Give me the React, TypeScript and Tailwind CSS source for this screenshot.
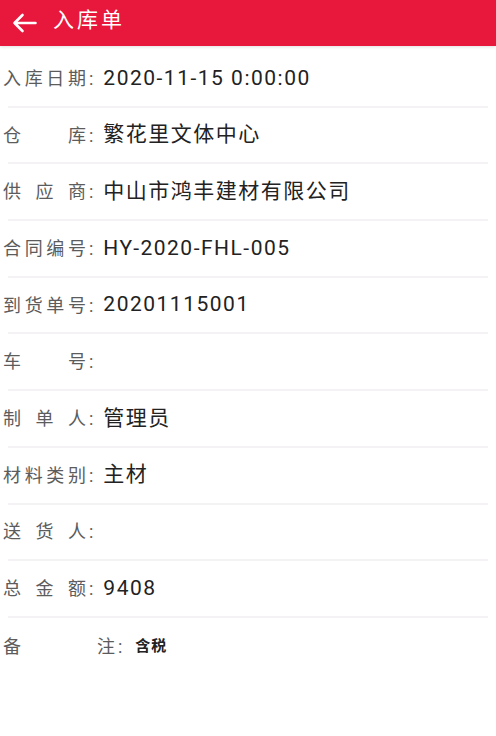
import React from "react";

const rows: { label: string[]; value: string }[] = [
  { label: ["入", "库", "日", "期"], value: "2020-11-15 0:00:00" },
  { label: ["仓", "库"], value: "繁花里文体中心" },
  { label: ["供", "应", "商"], value: "中山市鸿丰建材有限公司" },
  { label: ["合", "同", "编", "号"], value: "HY-2020-FHL-005" },
  { label: ["到", "货", "单", "号"], value: "20201115001" },
  { label: ["车", "号"], value: "" },
  { label: ["制", "单", "人"], value: "管理员" },
  { label: ["材", "料", "类", "别"], value: "主材" },
  { label: ["送", "货", "人"], value: "" },
  { label: ["总", "金", "额"], value: "9408" },
];

const font = {
  fontFamily: 'Roboto, "Noto Sans CJK SC", "Noto Sans", sans-serif',
};

function Label({ chars, width }: { chars: string[]; width: string }) {
  return (
    <div className="flex shrink-0 items-center text-[18px] text-[#5c5c5c]">
      <div className={`flex items-center justify-between ${width}`}>
        {chars.map((c, i) => (
          <span key={i}>{c}</span>
        ))}
      </div>
      <span className="ml-[3px]">:</span>
    </div>
  );
}

export default function App() {
  return (
    <div className="min-h-[736px] w-full bg-white" style={font}>
      <header className="flex h-[46px] items-center bg-[#e8173c] text-white shadow-[0_1px_3px_rgba(0,0,0,0.12)]">
        <svg width="25" height="20" viewBox="0 0 25 20" className="ml-[12px]">
          <path
            d="M23.5 10H2.5M10.5 2L2.5 10L10.5 18"
            fill="none"
            stroke="white"
            strokeWidth="2.6"
            strokeLinecap="round"
            strokeLinejoin="round"
          />
        </svg>
        <span className="ml-[16px] -mt-[4px] text-[21px] tracking-[3px]">入库单</span>
      </header>

      <div className="pt-[5px]">
        {rows.map((r) => (
          <div
            key={r.label.join("")}
            className="mx-2 flex h-[56.7px] items-center border-b-2 border-[#f4f2f4]"
          >
            <div className="-ml-[5px] flex items-center">
              <Label chars={r.label} width="w-[83px]" />
              <span className="ml-[10px] text-[21px] tracking-[1.5px] text-[#222]">{r.value}</span>
            </div>
          </div>
        ))}
        <div className="mx-2 flex h-[56.7px] items-center">
          <div className="-ml-[5px] flex items-center">
            <Label chars={["备", "注"]} width="w-[112px]" />
            <span className="ml-[13px] text-[15px] font-semibold tracking-[1px] text-[#222]">含税</span>
          </div>
        </div>
      </div>
    </div>
  );
}
